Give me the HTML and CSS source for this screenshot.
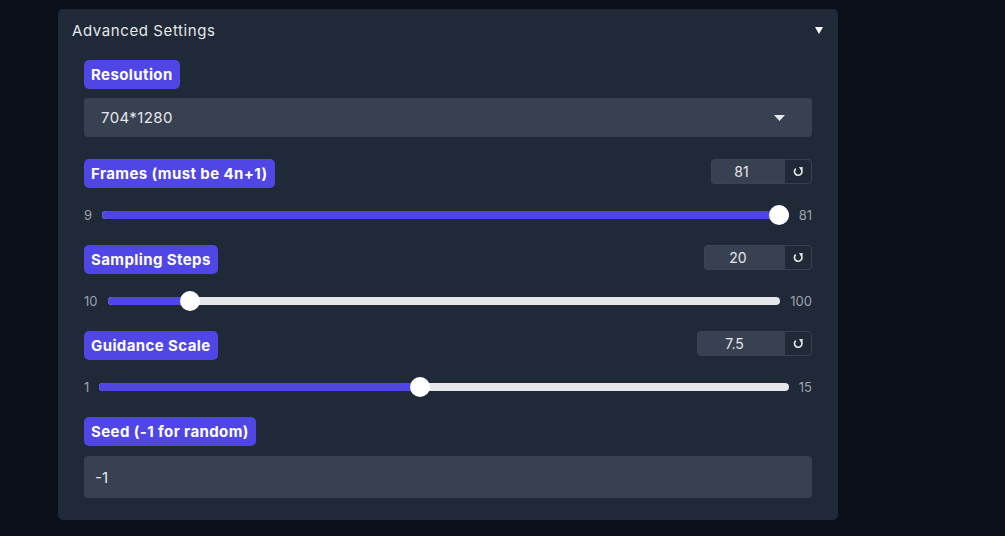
FILE: index.html
```html
<!DOCTYPE html>
<html>
<head>
<meta charset="utf-8">
<link rel="stylesheet" href="styles.css">
</head>
<body>
<div class="panel">
  <div class="panel-head">
    <span class="panel-title">Advanced Settings</span>
    <svg class="caret" width="8" height="7" viewBox="0 0 8 7"><path d="M0 0H8L4 7Z" fill="#fff"/></svg>
  </div>
  <div class="content">
    <div class="block block-first">
      <span class="label">Resolution</span>
      <div class="dropdown">
        <span>704*1280</span>
        <svg width="11" height="6" viewBox="0 0 11 6"><path d="M0 0H11L5.5 6Z" fill="#e5e7eb"/></svg>
      </div>
    </div>

    <div class="block">
      <div class="head-row">
        <span class="label">Frames (must be 4n+1)</span>
        <div class="num">
          <span class="num-val w73">81</span>
          <span class="reset"><svg width="11" height="11" viewBox="0 0 12 12"><path d="M3.1 2.8A4.1 4.1 0 1 0 8.8 3.3" fill="none" stroke="#e5e7eb" stroke-width="1.8"/><path d="M6.4 1.2L11 1.4 9.6 5.6Z" fill="#e5e7eb"/></svg></span>
        </div>
      </div>
      <div class="slider-row">
        <span class="minmax">9</span>
        <div class="track" style="--p:1"><div class="fill"></div><div class="thumb"></div></div>
        <span class="minmax">81</span>
      </div>
    </div>

    <div class="block">
      <div class="head-row">
        <span class="label">Sampling Steps</span>
        <div class="num">
          <span class="num-val w80">20</span>
          <span class="reset"><svg width="11" height="11" viewBox="0 0 12 12"><path d="M3.1 2.8A4.1 4.1 0 1 0 8.8 3.3" fill="none" stroke="#e5e7eb" stroke-width="1.8"/><path d="M6.4 1.2L11 1.4 9.6 5.6Z" fill="#e5e7eb"/></svg></span>
        </div>
      </div>
      <div class="slider-row">
        <span class="minmax">10</span>
        <div class="track" style="--p:0.1111"><div class="fill"></div><div class="thumb"></div></div>
        <span class="minmax">100</span>
      </div>
    </div>

    <div class="block">
      <div class="head-row">
        <span class="label">Guidance Scale</span>
        <div class="num">
          <span class="num-val w87">7.5</span>
          <span class="reset"><svg width="11" height="11" viewBox="0 0 12 12"><path d="M3.1 2.8A4.1 4.1 0 1 0 8.8 3.3" fill="none" stroke="#e5e7eb" stroke-width="1.8"/><path d="M6.4 1.2L11 1.4 9.6 5.6Z" fill="#e5e7eb"/></svg></span>
        </div>
      </div>
      <div class="slider-row">
        <span class="minmax">1</span>
        <div class="track" style="--p:0.4643"><div class="fill"></div><div class="thumb"></div></div>
        <span class="minmax">15</span>
      </div>
    </div>

    <div class="block">
      <span class="label">Seed (-1 for random)</span>
      <div class="textbox">-1</div>
    </div>
  </div>
</div>
</body>
</html>
```

FILE: styles.css
```css
* { box-sizing: border-box; }
html, body { margin: 0; height: 100%; }
body {
  background: #0b0f19;
  font-family: Inter, "Open Sans", sans-serif;
  color: #e5e7eb;
  padding: 9px 0 0 58px;
}
.panel {
  width: 780px;
  height: 511px;
  background: #1f2937;
  border-radius: 5px;
  padding: 10px 14px 0 14px;
}
.panel-head {
  display: flex;
  align-items: center;
  justify-content: space-between;
  height: 22px;
}
.panel-title {
  font-size: 15px;
  color: #e5e7eb;
  letter-spacing: 0.6px;
}
.caret { margin-right: 1px; }
.content {
  padding: 19px 12px 0 12px;
  display: flex;
  flex-direction: column;
  gap: 19px;
}
.block {
  display: flex;
  flex-direction: column;
}
.block-first { padding-bottom: 3px; }
.label {
  align-self: flex-start;
  background: #4f46e5;
  color: #fff;
  font-weight: 700;
  font-size: 15px;
  line-height: 29px;
  height: 29px;
  padding: 0 7px;
  border-radius: 5px;
  letter-spacing: 0.4px;
}
.dropdown {
  margin-top: 9px;
  height: 39px;
  background: #374151;
  border-radius: 4px;
  display: flex;
  align-items: center;
  justify-content: space-between;
  padding: 0 27px 0 17px;
  font-size: 15px;
  color: #e5e7eb;
  letter-spacing: 0.4px;
}
.head-row {
  display: flex;
  justify-content: space-between;
  align-items: flex-start;
}
.num {
  display: flex;
  height: 25px;
}
.num-val {
  background: #374151;
  border: 1px solid #3b4454;
  border-right: none;
  border-radius: 4px 0 0 4px;
  font-size: 14px;
  display: flex;
  align-items: center;
  justify-content: center;
  padding-right: 13px;
  color: #e5e7eb;
}
.w73 { width: 73px; }
.w80 { width: 80px; }
.w87 { width: 87px; }
.reset {
  width: 28px;
  background: #1f2937;
  border: 1px solid #374151;
  border-radius: 0 4px 4px 0;
  display: flex;
  align-items: center;
  justify-content: center;
}
.slider-row {
  margin-top: 17px;
  margin-bottom: 1px;
  height: 20px;
  display: flex;
  align-items: center;
  gap: 10px;
}
.minmax {
  font-size: 13px;
  color: #9ca3af;
}
.track {
  position: relative;
  flex: 1;
  height: 8px;
  background: #e5e7eb;
  border-radius: 4px;
}
.fill {
  position: absolute;
  left: 0; top: 0; bottom: 0;
  width: calc(10px + var(--p) * (100% - 20px));
  background: #4f46e5;
  border-radius: 4px;
}
.thumb {
  position: absolute;
  top: -6px;
  left: calc(var(--p) * (100% - 20px));
  width: 20px;
  height: 20px;
  border-radius: 50%;
  background: #fff;
}
.textbox {
  margin-top: 10px;
  height: 42px;
  background: #374151;
  border-radius: 4px;
  display: flex;
  align-items: center;
  padding: 0 11px;
  font-size: 15px;
  color: #e5e7eb;
}
```
